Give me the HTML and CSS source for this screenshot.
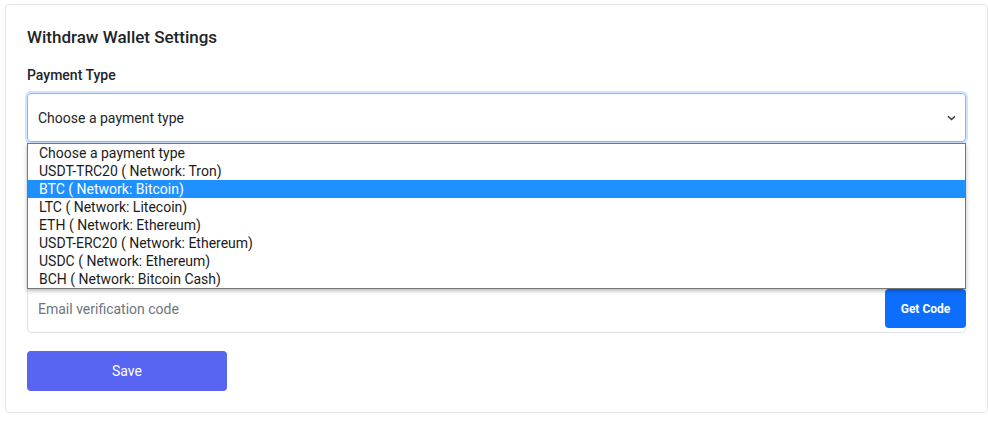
FILE: index.html
```html
<!DOCTYPE html>
<html lang="en">
<head>
<meta charset="utf-8">
<title>Withdraw Wallet Settings</title>
<link rel="stylesheet" href="styles.css">
</head>
<body>
<div class="card">
  <h5 class="card-title">Withdraw Wallet Settings</h5>
  <div class="field first">
    <label class="label">Payment Type</label>
    <div class="select-wrap">
      <div class="select">
        <span>Choose a payment type</span>
        <svg class="chev" width="9" height="6" viewBox="0 0 9 6"><path d="M1 1.2 L4.5 4.6 L8 1.2" fill="none" stroke="#343a40" stroke-width="1.4"/></svg>
      </div>
      <ul class="dropdown">
        <li>Choose a payment type</li>
        <li>USDT-TRC20 ( Network: Tron)</li>
        <li class="active">BTC ( Network: Bitcoin)</li>
        <li>LTC ( Network: Litecoin)</li>
        <li>ETH ( Network: Ethereum)</li>
        <li>USDT-ERC20 ( Network: Ethereum)</li>
        <li>USDC ( Network: Ethereum)</li>
        <li>BCH ( Network: Bitcoin Cash)</li>
      </ul>
    </div>
  </div>
  <div class="field hidden-field">
    <div class="label-space"></div>
    <div class="input"></div>
  </div>
  <div class="field code-field">
    <div class="label-space"></div>
    <div class="input group">
      <span class="ph">Email verification code</span>
      <button class="btn-code">Get Code</button>
    </div>
  </div>
  <button class="btn-save">Save</button>
</div>
</body>
</html>
```
FILE: styles.css
```css
* { box-sizing: border-box; }
body {
  margin: 0;
  background: #fff;
  font-family: Roboto, "Liberation Sans", Arial, sans-serif;
  color: #212529;
}
.card {
  margin: 4px 0 0 5px;
  width: 983px;
  border: 1px solid #e3e5e8;
  border-radius: 4px;
  padding: 23px 21px 21px;
  background: #fff;
}
.card-title {
  margin: 0;
  font-size: 17px;
  line-height: 19px;
  font-weight: 500;
  color: #212529;
}
.field { margin-top: 18px; }
.hidden-field { margin-top: 19px; }
.code-field { margin-top: 18px; }
.label {
  display: block;
  font-size: 14px;
  line-height: 20px;
  font-weight: 500;
  margin-bottom: 8px;
  color: #212529;
}
.label-space { height: 20px; margin-bottom: 8px; }
.select-wrap { position: relative; }
.select {
  height: 49px;
  border: 1px solid #86b7fe;
  border-radius: 4px;
  box-shadow: 0 0 0 2px #cfe2fe;
  display: flex;
  align-items: center;
  justify-content: space-between;
  padding: 0 9px 0 10px;
  font-size: 14px;
  color: #212529;
}
.chev { display: block; margin-top: 1px; }
.dropdown {
  position: absolute;
  left: 0;
  top: 50px;
  width: 939px;
  margin: 0;
  padding: 0;
  list-style: none;
  background: #fff;
  border: 1px solid #767676;
  box-shadow: 0 2px 4px rgba(0,0,0,0.28);
  z-index: 5;
}
.dropdown li {
  height: 18px;
  line-height: 18px;
  font-size: 14px;
  padding-left: 11px;
  color: #1b1b1b;
  white-space: nowrap;
}
.dropdown li.active {
  background: #1e90ff;
  color: #fff;
}
.input {
  height: 49px;
  border: 1px solid #dee2e6;
  border-radius: 4px;
  display: flex;
  align-items: center;
  padding-left: 10px;
  font-size: 14px;
}
.ph { color: #6c757d; flex: 1; }
.group { padding-right: 0; }
.btn-code {
  height: 39px;
  width: 81px;
  margin-right: -1px;
  border: 0;
  border-radius: 4px;
  background: #0d6efd;
  color: #fff;
  font-family: Roboto, "Liberation Sans", Arial, sans-serif;
  font-weight: 700;
  font-size: 12px;
}
.btn-save {
  display: block;
  margin-top: 18px;
  width: 200px;
  height: 40px;
  border: 0;
  border-radius: 4px;
  background: #5865f2;
  color: #fff;
  font-family: Roboto, "Liberation Sans", Arial, sans-serif;
  font-size: 14px;
}
```
